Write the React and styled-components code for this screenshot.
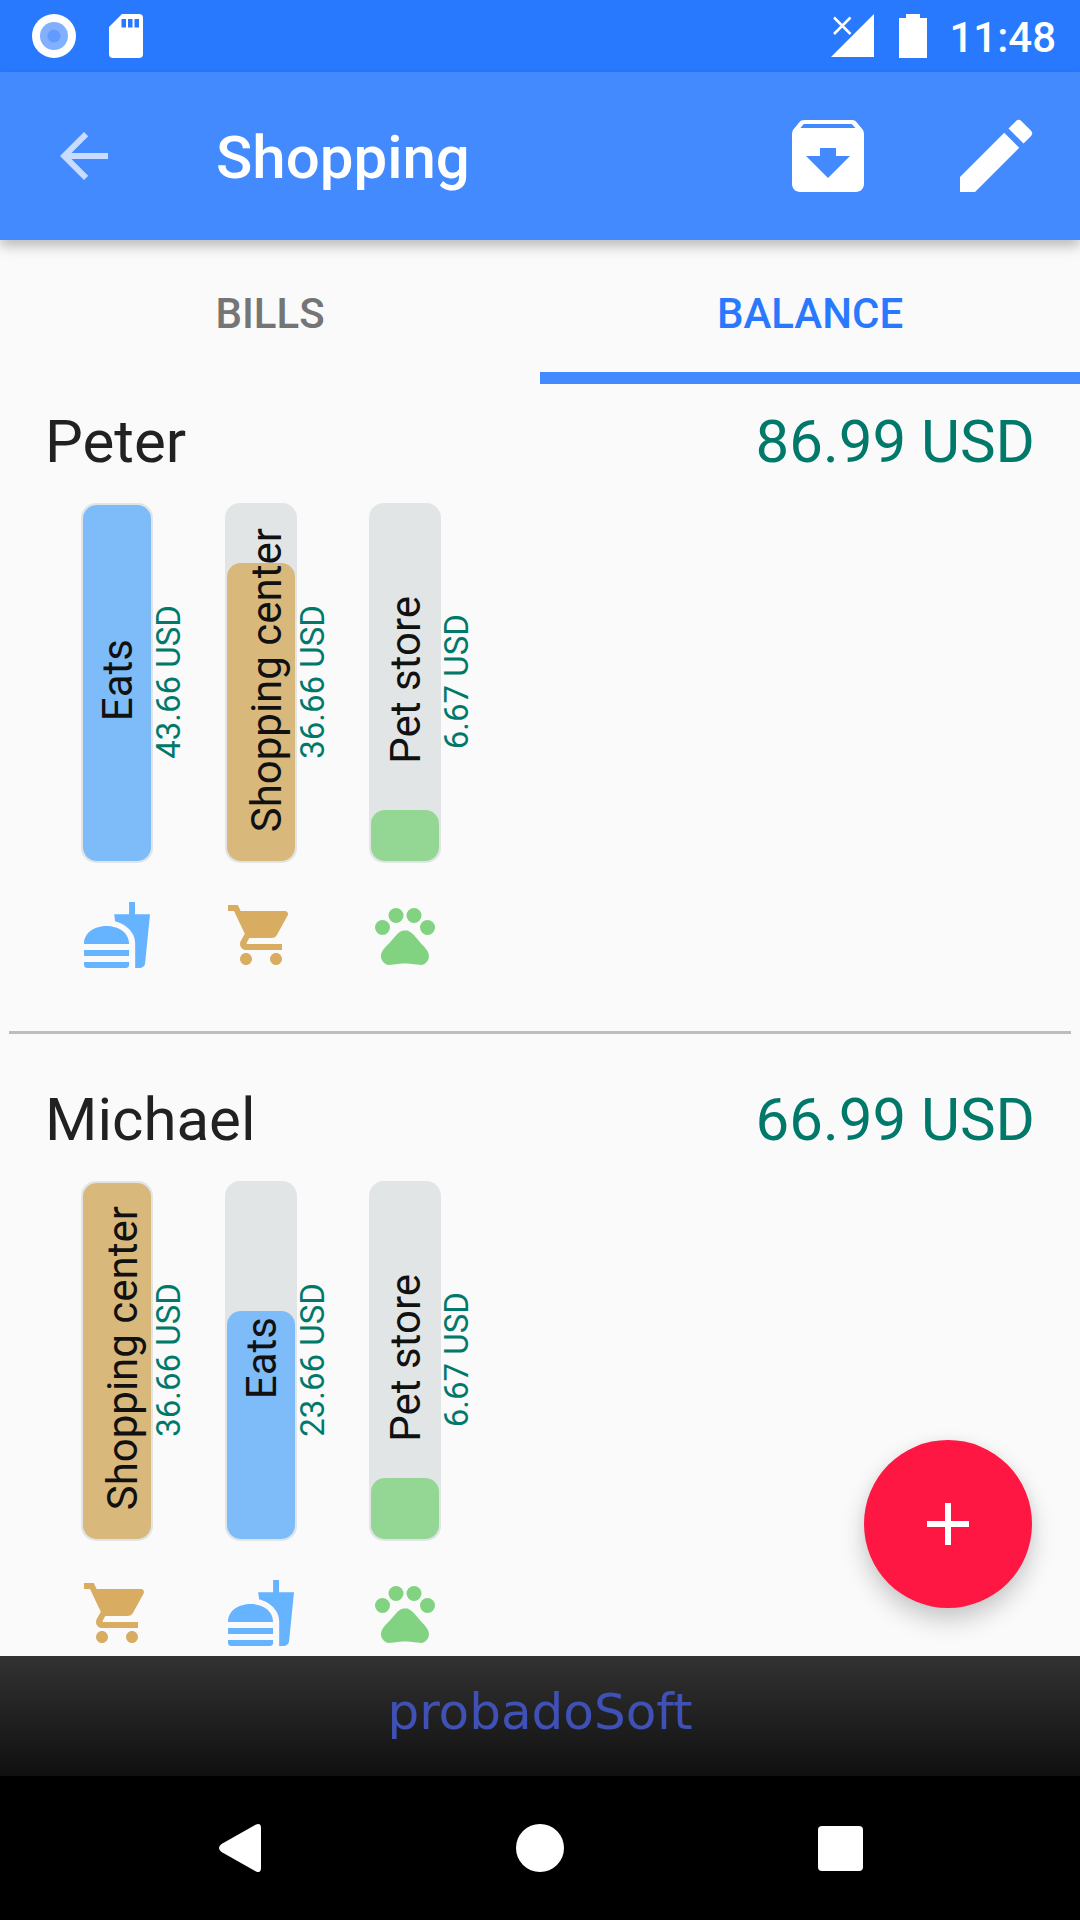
import { useState } from 'react';
import styled, { createGlobalStyle } from 'styled-components';
import { MdAdd, MdArchive, MdArrowBack, MdEdit, MdFastfood, MdPets, MdShoppingCart } from 'react-icons/md';

const GlobalStyle = createGlobalStyle`
    * {
        box-sizing: border-box;
    }

    body {
        margin: 0;
        background-color: #fafafa;
        font-family: Roboto, "Liberation Sans", sans-serif;
    }

    button {
        display: flex;
        align-items: center;
        justify-content: center;
        padding: 0;
        border: none;
        background: none;
        color: inherit;
        font: inherit;
        cursor: pointer;
    }

    svg {
        display: block;
        flex-shrink: 0;
    }
`

const Screen = styled.div`
    display: flex;
    flex-direction: column;
    height: 100vh;
`

const StatusBar = styled.div`
    display: flex;
    align-items: center;
    flex-shrink: 0;
    height: 72px;
    padding: 0 24px 0 32px;
    background-color: #2979ff;
    color: #fff;

    & > .spacer {
        flex-grow: 1;
    }
`

const StatusIcons = styled.div`
    display: flex;
    align-items: center;
    gap: ${({ $gap }) => $gap}px;
`

const Clock = styled.time`
    margin-left: 22px;
    padding-top: 4px;
    font-size: 42px;
    font-weight: 500;
    line-height: 48px;
`

const AppBar = styled.header`
    display: flex;
    align-items: center;
    flex-shrink: 0;
    height: 168px;
    padding: 0 36px 0 48px;
    background-color: #448aff;
    color: #fff;
    box-shadow: 0 6px 12px rgba(0, 0, 0, 0.26);
    z-index: 1;

    & > h1 {
        flex-grow: 1;
        margin: 0 0 0 96px;
        padding-top: 4px;
        font-size: 60px;
        font-weight: 500;
        line-height: 70px;
    }
`

const BackButton = styled.button`
    font-size: 72px;
    opacity: 0.7;
`

const Actions = styled.div`
    display: flex;
    gap: 72px;
    font-size: 96px;
`

const Tabs = styled.div`
    display: flex;
    flex-shrink: 0;
`

const Tab = styled.button`
    && {
        flex: 1;
        height: 144px;
        padding-top: 16px;
        border-bottom: 12px solid ${({ $active }) => $active ? '#448aff' : 'transparent'};
        color: ${({ $active }) => $active ? '#2979ff' : '#757575'};
        font-size: 42px;
        font-weight: 500;
        line-height: 48px;
    }
`

const Content = styled.main`
    position: relative;
    display: flex;
    flex-direction: column;
    flex: 1;
    min-height: 0;
`

const List = styled.div`
    flex: 1;
    overflow-y: auto;
    scrollbar-width: none;
`

const Person = styled.section`
    margin: 0 9px 28px;
    padding: 23px 36px 60px;
    border-bottom: 3px solid #bdbdbd;
`

const PersonHeader = styled.div`
    display: flex;
    justify-content: space-between;
    margin-bottom: 26px;
    font-size: 60px;
    line-height: 70px;

    & > h2 {
        margin: 0;
        color: #212121;
        font-size: inherit;
        font-weight: 400;
    }

    & > span {
        color: #00796b;
    }
`

const Columns = styled.div`
    display: flex;
    padding-left: 36px;
`

const Column = styled.div`
    width: 144px;
    color: ${({ $color }) => $color};

    & > svg {
        margin-top: 36px;
        font-size: 72px;
    }
`

const BarRow = styled.div`
    display: flex;
    align-items: center;
`

const Track = styled.div`
    display: grid;
    width: 72px;
    height: 360px;
    border-radius: 15px;
    background-color: #e1e5e5;

    & > * {
        grid-area: 1 / 1;
    }
`

const Fill = styled.div`
    align-self: end;
    border: 2px solid transparent;
    border-radius: 16px;
    background-color: currentColor;
    background-clip: padding-box;
    opacity: 0.8;
`

const SideText = styled.span`
    writing-mode: vertical-rl;
    transform: rotate(180deg);
    white-space: nowrap;
`

// a name with descenders sits lower in the bar
const BarLabel = styled(SideText)`
    place-self: center;
    padding-top: 6px;
    padding-right: ${({ $descends }) => $descends ? 12 : 2}px;
    color: #111;
    font-size: 42px;
    line-height: 48px;
    z-index: 1;
`

const BarAmount = styled(SideText)`
    padding-top: 2px;
    color: #00796b;
    font-size: 33px;
    line-height: 32px;
`

const Fab = styled.button`
    && {
        position: absolute;
        right: 48px;
        bottom: 48px;
        width: 168px;
        height: 168px;
        border-radius: 50%;
        background-color: #ff1744;
        color: #fff;
        font-size: 72px;
        box-shadow: 0 12px 24px rgba(0, 0, 0, 0.2), 0 0 12px rgba(0, 0, 0, 0.04);
    }
`

const Banner = styled.a`
    display: flex;
    align-items: center;
    justify-content: center;
    flex-shrink: 0;
    height: 120px;
    padding-bottom: 8px;
    background: linear-gradient(#323232, #101010);
    color: #3f51b5;
    font-family: "DejaVu Sans", sans-serif;
    font-size: 50px;
    line-height: 56px;
    text-decoration: none;
`

const NavBar = styled.nav`
    display: flex;
    flex-shrink: 0;
    height: 144px;
    padding: 0 90px;
    background-color: #000;

    & > button {
        flex: 1;
    }
`

const categories = {
    eats: { name: 'Eats', color: '#66b3ff', Icon: MdFastfood },
    shopping: { name: 'Shopping center', color: '#d8ad62', Icon: MdShoppingCart },
    pets: { name: 'Pet store', color: '#81d381', Icon: MdPets },
};

const people = [
    {
        name: 'Peter',
        total: 86.99,
        expenses: [
            { category: 'eats', amount: 43.66 },
            { category: 'shopping', amount: 36.66 },
            { category: 'pets', amount: 6.67 },
        ],
    },
    {
        name: 'Michael',
        total: 66.99,
        expenses: [
            { category: 'shopping', amount: 36.66 },
            { category: 'eats', amount: 23.66 },
            { category: 'pets', amount: 6.67 },
        ],
    },
];

const RecordIcon = () => (
    <svg width='44' height='44' viewBox='0 0 44 44' fill='#fff'>
        <circle cx='22' cy='22' r='22'/>
        <circle cx='22' cy='22' r='14' fill='#82b0ff'/>
        <circle cx='22' cy='22' r='6.5' fill='#619bff'/>
    </svg>
)

const SdCardIcon = () => (
    <svg width='34' height='44' viewBox='0 0 34 44'>
        <path fill='#fff' d='M13 0h17a4 4 0 0 1 4 4v36a4 4 0 0 1-4 4H4a4 4 0 0 1-4-4V13z'/>
        <path fill='#2979ff' d='M12.5 5h4.5v8.500h-4.500zM19 5h4.500v8.500H19zM25.500 5H30v8.500h-4.500z'/>
    </svg>
)

const SignalIcon = () => (
    <svg width='43' height='44' viewBox='0 0 43 44'>
        <path fill='#fff' d='M43 0v43H0z'/>
        <path stroke='#fff' strokeWidth='2.500' d='M3 3.500l16.500 16.500M19.500 3.500L3 20'/>
    </svg>
)

const BatteryIcon = () => (
    <svg width='28' height='44' viewBox='0 0 28 44'>
        <path fill='#fff' d='M7 0h14v4h7v40H0V4h7z'/>
    </svg>
)

const ExpenseColumn = ({ expense, max }) => {
    const { name, color, Icon } = categories[expense.category];

    return (
        <Column $color={color}>
            <BarRow>
                <Track>
                    <Fill style={{ height: `${expense.amount / max * 100}%` }}/>
                    <BarLabel $descends={/[gjpqy]/.test(name)}>{name}</BarLabel>
                </Track>
                <BarAmount>{expense.amount.toFixed(2)} USD</BarAmount>
            </BarRow>
            <Icon/>
        </Column>
    )
}

const PersonBalance = ({ person }) => {
    const max = Math.max(...person.expenses.map(e => e.amount));

    return (
        <Person>
            <PersonHeader>
                <h2>{person.name}</h2>
                <span>{person.total.toFixed(2)} USD</span>
            </PersonHeader>
            <Columns>
                {person.expenses.map(expense => (
                    <ExpenseColumn key={expense.category} expense={expense} max={max}/>
                ))}
            </Columns>
        </Person>
    )
}

const App = () => {
    const [tab, setTab] = useState('balance');

    return (
        <Screen>
            <GlobalStyle/>
            <StatusBar>
                <StatusIcons $gap={33}>
                    <RecordIcon/>
                    <SdCardIcon/>
                </StatusIcons>
                <div className='spacer'></div>
                <StatusIcons $gap={25}>
                    <SignalIcon/>
                    <BatteryIcon/>
                </StatusIcons>
                <Clock>11:48</Clock>
            </StatusBar>
            <AppBar>
                <BackButton aria-label='Back'><MdArrowBack/></BackButton>
                <h1>Shopping</h1>
                <Actions>
                    <button aria-label='Archive'><MdArchive/></button>
                    <button aria-label='Edit'><MdEdit/></button>
                </Actions>
            </AppBar>
            <Tabs role='tablist'>
                <Tab role='tab' aria-selected={tab === 'bills'} $active={tab === 'bills'} onClick={() => setTab('bills')}>BILLS</Tab>
                <Tab role='tab' aria-selected={tab === 'balance'} $active={tab === 'balance'} onClick={() => setTab('balance')}>BALANCE</Tab>
            </Tabs>
            <Content>
                <List>
                    {people.map(person => <PersonBalance key={person.name} person={person}/>)}
                </List>
                <Fab aria-label='Add bill'><MdAdd/></Fab>
            </Content>
            <Banner href='#'>probadoSoft</Banner>
            <NavBar>
                <button aria-label='Back'>
                    <svg width='42' height='48' viewBox='0 0 42 48' fill='#fff'>
                        <path d='M37 .6Q42-1.500 42 4v40q0 5.500-5 3.400L2.500 28q-5-4 0-8z'/>
                    </svg>
                </button>
                <button aria-label='Home'>
                    <svg width='48' height='48' viewBox='0 0 48 48' fill='#fff'>
                        <circle cx='24' cy='24' r='24'/>
                    </svg>
                </button>
                <button aria-label='Recent apps'>
                    <svg width='45' height='45' viewBox='0 0 45 45' fill='#fff'>
                        <rect width='45' height='45' rx='4'/>
                    </svg>
                </button>
            </NavBar>
        </Screen>
    )
}

export default App;
